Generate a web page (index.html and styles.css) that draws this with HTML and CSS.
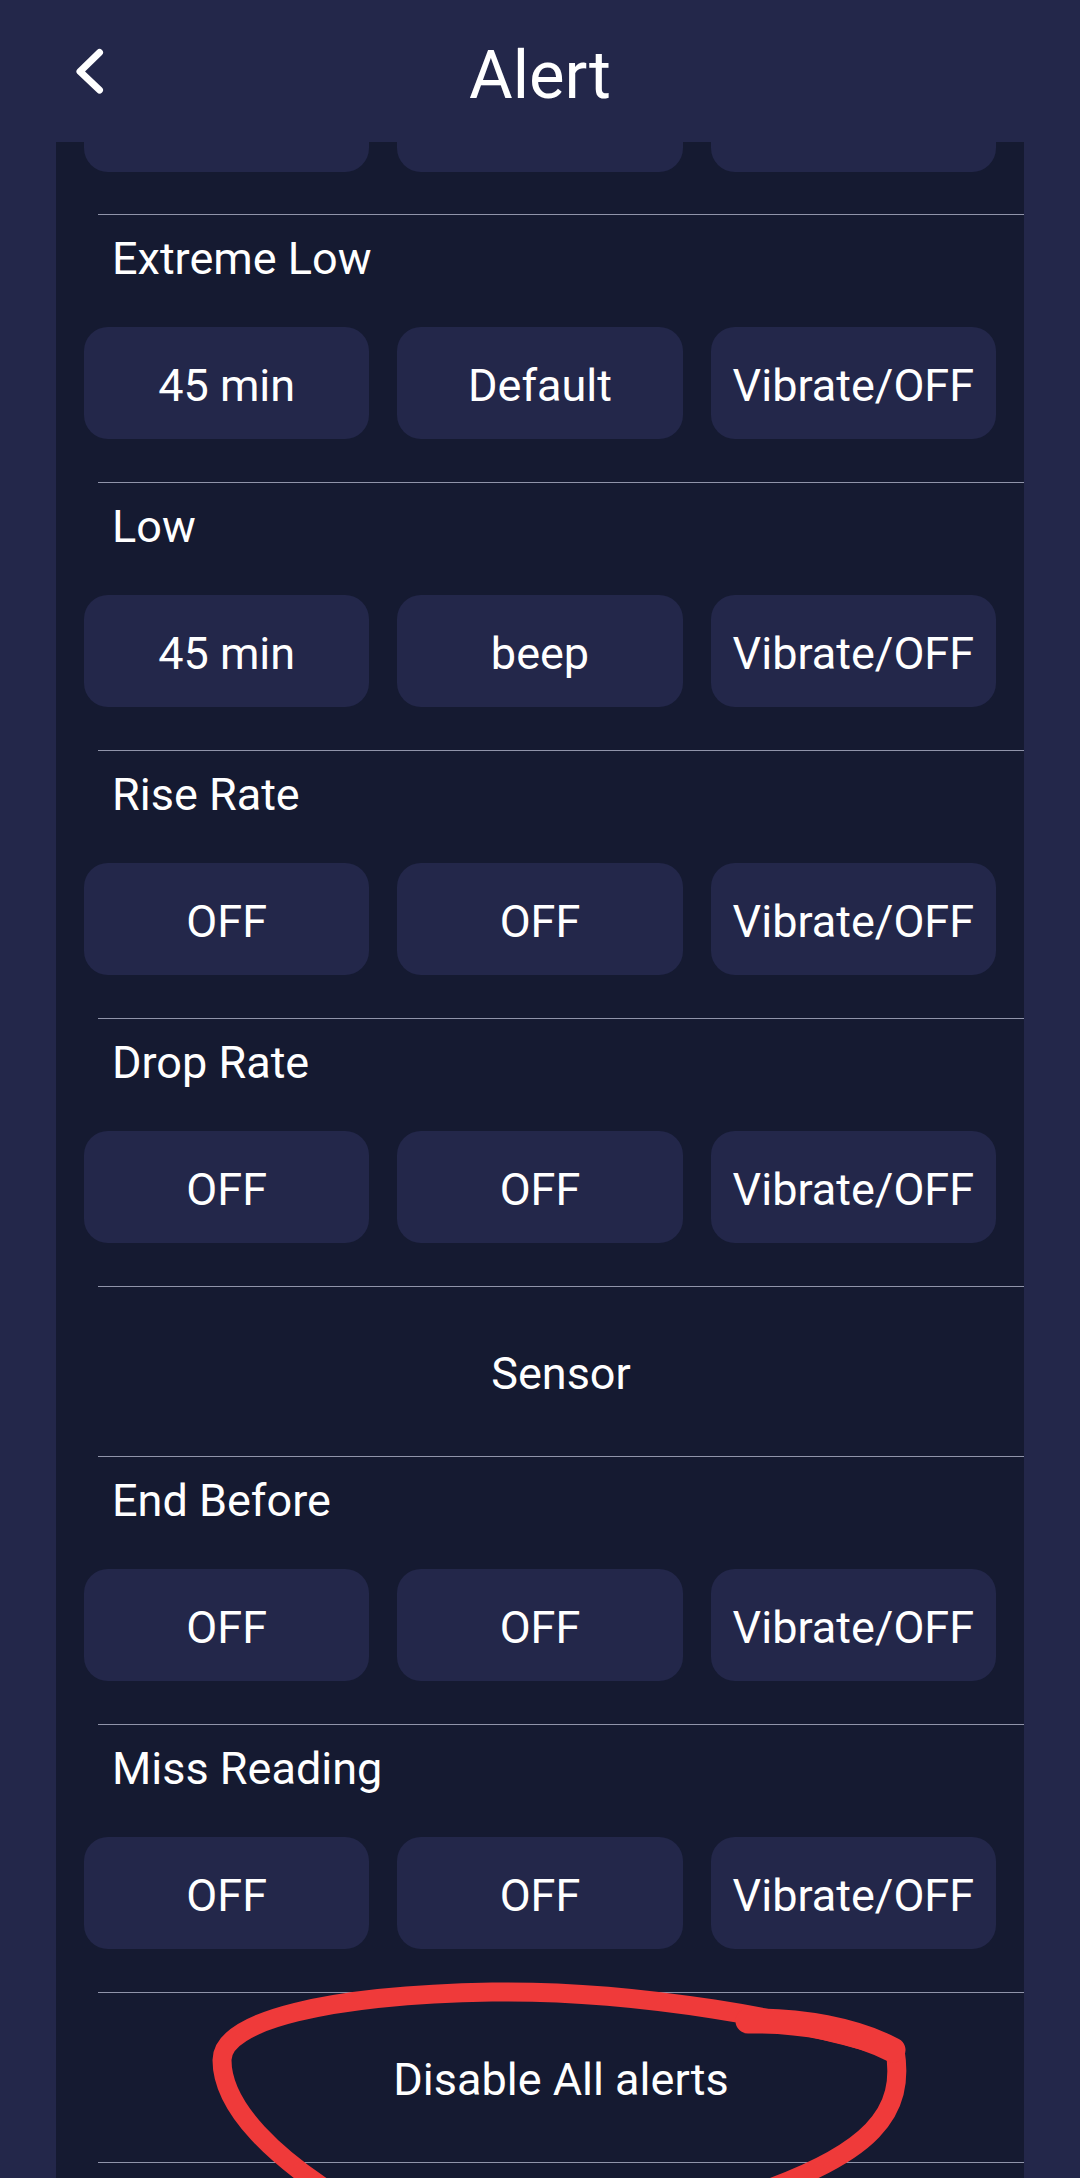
FILE: index.html
```html
<!DOCTYPE html>
<html lang="en">
<head>
<meta charset="utf-8">
<title>Alert</title>
<link rel="stylesheet" href="styles.css">
</head>
<body>
<div class="page">
  <header class="topbar">
    <a class="back" aria-label="Back">
      <svg width="40" height="54" viewBox="0 0 40 54"><polyline points="29.5,8.5 10,27.5 29.5,46" fill="none" stroke="#ffffff" stroke-width="7" stroke-linecap="round" stroke-linejoin="round"/></svg>
    </a>
    <h1 class="title">Alert</h1>
    <span class="spacer"></span>
  </header>

  <main class="panel">
    <div class="btn-row partial">
      <div class="btn"></div><div class="btn"></div><div class="btn"></div>
    </div>

    <div class="divider"></div>
    <section class="item">
      <div class="label">Extreme Low</div>
      <div class="btn-row">
        <div class="btn">45 min</div><div class="btn">Default</div><div class="btn">Vibrate/OFF</div>
      </div>
    </section>

    <div class="divider"></div>
    <section class="item">
      <div class="label">Low</div>
      <div class="btn-row">
        <div class="btn">45 min</div><div class="btn">beep</div><div class="btn">Vibrate/OFF</div>
      </div>
    </section>

    <div class="divider"></div>
    <section class="item">
      <div class="label">Rise Rate</div>
      <div class="btn-row">
        <div class="btn">OFF</div><div class="btn">OFF</div><div class="btn">Vibrate/OFF</div>
      </div>
    </section>

    <div class="divider"></div>
    <section class="item">
      <div class="label">Drop Rate</div>
      <div class="btn-row">
        <div class="btn">OFF</div><div class="btn">OFF</div><div class="btn">Vibrate/OFF</div>
      </div>
    </section>

    <div class="divider"></div>
    <section class="center-item">Sensor</section>

    <div class="divider"></div>
    <section class="item">
      <div class="label">End Before</div>
      <div class="btn-row">
        <div class="btn">OFF</div><div class="btn">OFF</div><div class="btn">Vibrate/OFF</div>
      </div>
    </section>

    <div class="divider"></div>
    <section class="item">
      <div class="label">Miss Reading</div>
      <div class="btn-row">
        <div class="btn">OFF</div><div class="btn">OFF</div><div class="btn">Vibrate/OFF</div>
      </div>
    </section>

    <div class="divider"></div>
    <section class="center-item">Disable All alerts</section>
    <div class="divider"></div>
  </main>

  <svg class="annotation" viewBox="0 0 1080 2178" width="1080" height="2178" aria-hidden="true">
    <path d="M 335 2195 C 280 2160 222 2110 222 2060 C 222 2020 330 1995 492 1992 C 640 1990 800 2020 895 2050 C 905 2110 878 2155 735 2200" fill="none" stroke="#ef3a3a" stroke-width="19" stroke-linecap="round" stroke-linejoin="round"/>
    <path d="M 748 2021 C 800 2020 855 2030 893 2050" fill="none" stroke="#ef3a3a" stroke-width="25" stroke-linecap="round"/>
  </svg>
</div>
</body>
</html>
```

FILE: styles.css
```css
* {
  box-sizing: border-box;
}

html, body {
  margin: 0;
  padding: 0;
  background: #23274a;
}

body {
  font-family: Roboto, "Noto Sans", "Liberation Sans", sans-serif;
  color: #ffffff;
}

.page {
  position: relative;
  width: 1080px;
  height: 2178px;
  overflow: hidden;
  display: flex;
  flex-direction: column;
}

.topbar {
  height: 142px;
  flex: 0 0 142px;
  display: grid;
  grid-template-columns: 1fr auto 1fr;
  align-items: start;
  padding-top: 36px;
}

.back {
  display: block;
  width: 40px;
  height: 54px;
  margin-left: 70px;
  margin-top: 8px;
}

.back svg {
  display: block;
}

.title {
  margin: 0;
  font-size: 67px;
  line-height: 78px;
  font-weight: 400;
  text-align: center;
}

.panel {
  flex: 1 1 auto;
  margin: 0 56px;
  background: #151a31;
  overflow: hidden;
}

.btn-row {
  display: grid;
  grid-template-columns: repeat(3, 1fr);
  gap: 28px;
  padding: 0 28px;
}

.btn {
  height: 112px;
  border-radius: 24px;
  background: #23274a;
  display: flex;
  align-items: center;
  justify-content: center;
  padding-top: 5px;
  font-size: 45px;
  line-height: 52px;
  color: #ffffff;
}

.partial {
  margin-top: -82px;
  margin-bottom: 42px;
}

.divider {
  height: 1px;
  margin-left: 42px;
  background: #9094aa;
}

.item {
  padding: 18px 0 43px;
}

.label {
  font-size: 45px;
  line-height: 52px;
  padding-left: 56px;
  margin-bottom: 42px;
}

.center-item {
  height: 169px;
  margin-left: 42px;
  display: flex;
  align-items: center;
  justify-content: center;
  padding-top: 4px;
  font-size: 45px;
  line-height: 52px;
}

.annotation {
  position: absolute;
  top: 0;
  left: 0;
  pointer-events: none;
}
```
